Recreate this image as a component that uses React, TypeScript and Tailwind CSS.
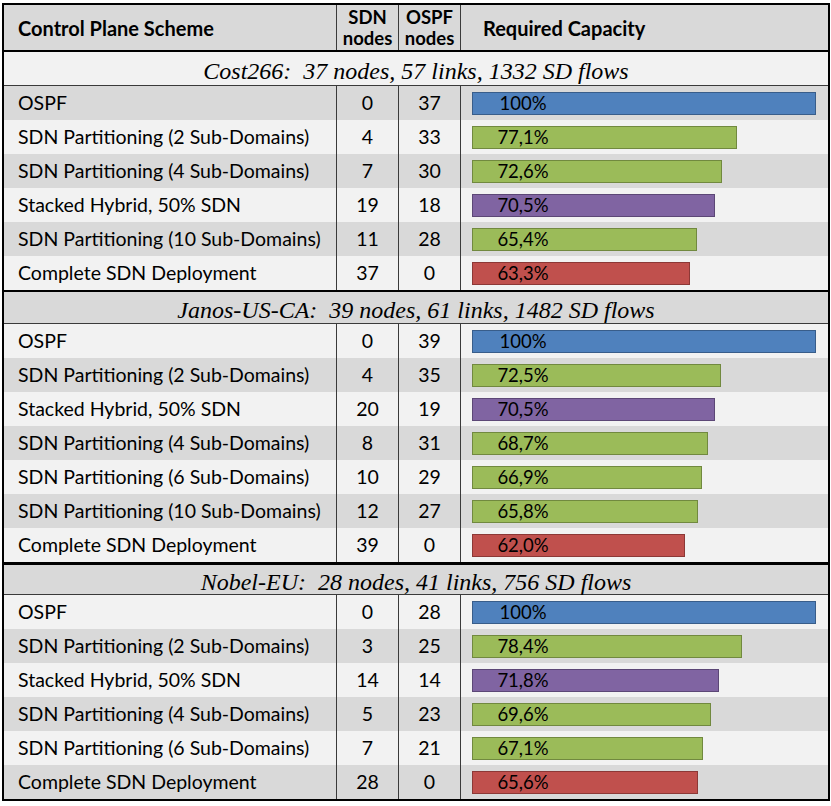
import React from "react";

type Row = { name: string; sdn: number; ospf: number; pct: number; label: string; kind: "b" | "g" | "p" | "r" };
type Section = { title: string; titleBg: "light" | "dark"; firstBg: "light" | "dark"; titleH: string; topBorder: string; rows: Row[] };

const barCls: Record<string, string> = {
  b: "bg-[#4f81bd] border-[#385d8a]",
  g: "bg-[#9bbb59] border-[#71893f]",
  p: "bg-[#8064a2] border-[#5c4776]",
  r: "bg-[#c0504d] border-[#8c3836]",
};

const sections: Section[] = [
  {
    title: "Cost266:  37 nodes, 57 links, 1332 SD flows",
    titleBg: "light",
    firstBg: "dark",
    titleH: "h-[34px]",
    topBorder: "",
    rows: [
      { name: "OSPF", sdn: 0, ospf: 37, pct: 100, label: "100%", kind: "b" },
      { name: "SDN Partitioning (2 Sub-Domains)", sdn: 4, ospf: 33, pct: 77.1, label: "77,1%", kind: "g" },
      { name: "SDN Partitioning (4 Sub-Domains)", sdn: 7, ospf: 30, pct: 72.6, label: "72,6%", kind: "g" },
      { name: "Stacked Hybrid, 50% SDN", sdn: 19, ospf: 18, pct: 70.5, label: "70,5%", kind: "p" },
      { name: "SDN Partitioning (10 Sub-Domains)", sdn: 11, ospf: 28, pct: 65.4, label: "65,4%", kind: "g" },
      { name: "Complete SDN Deployment", sdn: 37, ospf: 0, pct: 63.3, label: "63,3%", kind: "r" },
    ],
  },
  {
    title: "Janos-US-CA:  39 nodes, 61 links, 1482 SD flows",
    titleBg: "dark",
    firstBg: "light",
    titleH: "h-[32px]",
    topBorder: "border-t-2 border-black",
    rows: [
      { name: "OSPF", sdn: 0, ospf: 39, pct: 100, label: "100%", kind: "b" },
      { name: "SDN Partitioning (2 Sub-Domains)", sdn: 4, ospf: 35, pct: 72.5, label: "72,5%", kind: "g" },
      { name: "Stacked Hybrid, 50% SDN", sdn: 20, ospf: 19, pct: 70.5, label: "70,5%", kind: "p" },
      { name: "SDN Partitioning (4 Sub-Domains)", sdn: 8, ospf: 31, pct: 68.7, label: "68,7%", kind: "g" },
      { name: "SDN Partitioning (6 Sub-Domains)", sdn: 10, ospf: 29, pct: 66.9, label: "66,9%", kind: "g" },
      { name: "SDN Partitioning (10 Sub-Domains)", sdn: 12, ospf: 27, pct: 65.8, label: "65,8%", kind: "g" },
      { name: "Complete SDN Deployment", sdn: 39, ospf: 0, pct: 62.0, label: "62,0%", kind: "r" },
    ],
  },
  {
    title: "Nobel-EU:  28 nodes, 41 links, 756 SD flows",
    titleBg: "dark",
    firstBg: "light",
    titleH: "h-[30px]",
    topBorder: "border-t-[3px] border-black",
    rows: [
      { name: "OSPF", sdn: 0, ospf: 28, pct: 100, label: "100%", kind: "b" },
      { name: "SDN Partitioning (2 Sub-Domains)", sdn: 3, ospf: 25, pct: 78.4, label: "78,4%", kind: "g" },
      { name: "Stacked Hybrid, 50% SDN", sdn: 14, ospf: 14, pct: 71.8, label: "71,8%", kind: "p" },
      { name: "SDN Partitioning (4 Sub-Domains)", sdn: 5, ospf: 23, pct: 69.6, label: "69,6%", kind: "g" },
      { name: "SDN Partitioning (6 Sub-Domains)", sdn: 7, ospf: 21, pct: 67.1, label: "67,1%", kind: "g" },
      { name: "Complete SDN Deployment", sdn: 28, ospf: 0, pct: 65.6, label: "65,6%", kind: "r" },
    ],
  },
];

const sans = "font-['Lato','Open_Sans',sans-serif]";

export default function App() {
  return (
    <div className="w-[831px] h-[806px] bg-white pt-[3px] pl-[2px]">
      <div className={`w-[828px] border-2 border-black text-black ${sans}`}>
        {/* header */}
        <div className="flex h-[47px] bg-[#d9d9d9] border-b-2 border-black font-bold">
          <div className="w-[333px] border-r border-[#3a3a3a] flex items-center pl-[14px] text-[20px]">
            Control Plane Scheme
          </div>
          <div className="w-[62px] border-r border-[#3a3a3a] flex flex-col items-center justify-center text-[18.5px] leading-[21px]">
            <span>SDN</span>
            <span>nodes</span>
          </div>
          <div className="w-[62px] border-r border-[#3a3a3a] flex flex-col items-center justify-center text-[18.5px] leading-[21px]">
            <span>OSPF</span>
            <span>nodes</span>
          </div>
          <div className="flex-1 flex items-center pl-[22px] text-[20px]">Required Capacity</div>
        </div>
        {sections.map((s, si) => (
          <div key={si} className={s.topBorder}>
            <div
              className={`${s.titleH} flex items-center justify-center pt-[4px] border-b border-[#3a3a3a] italic text-[24px] leading-none font-['Liberation_Serif',serif] whitespace-pre ${
                s.titleBg === "dark" ? "bg-[#d9d9d9]" : "bg-[#f2f2f2]"
              }`}
            >
              {s.title}
            </div>
            {s.rows.map((r, ri) => {
              const dark = (ri % 2 === 0) === (s.firstBg === "dark");
              return (
                <div key={ri} className={`flex h-[34px] text-[19.5px] ${dark ? "bg-[#d9d9d9]" : "bg-[#f2f2f2]"}`}>
                  <div className="w-[333px] border-r border-[#3a3a3a] flex items-center pl-[14px]">{r.name}</div>
                  <div className="w-[62px] border-r border-[#3a3a3a] flex items-center justify-center">{r.sdn}</div>
                  <div className="w-[62px] border-r border-[#3a3a3a] flex items-center justify-center">{r.ospf}</div>
                  <div className="flex-1 flex items-center pl-[11px]">
                    <div
                      className={`h-[23px] border-[1.5px] flex items-center ${barCls[r.kind]}`}
                      style={{ width: `${(344 * r.pct) / 100}px` }}
                    >
                      <span className="w-[100px] text-center text-[18.5px] leading-none">{r.label}</span>
                    </div>
                  </div>
                </div>
              );
            })}
          </div>
        ))}
      </div>
    </div>
  );
}
